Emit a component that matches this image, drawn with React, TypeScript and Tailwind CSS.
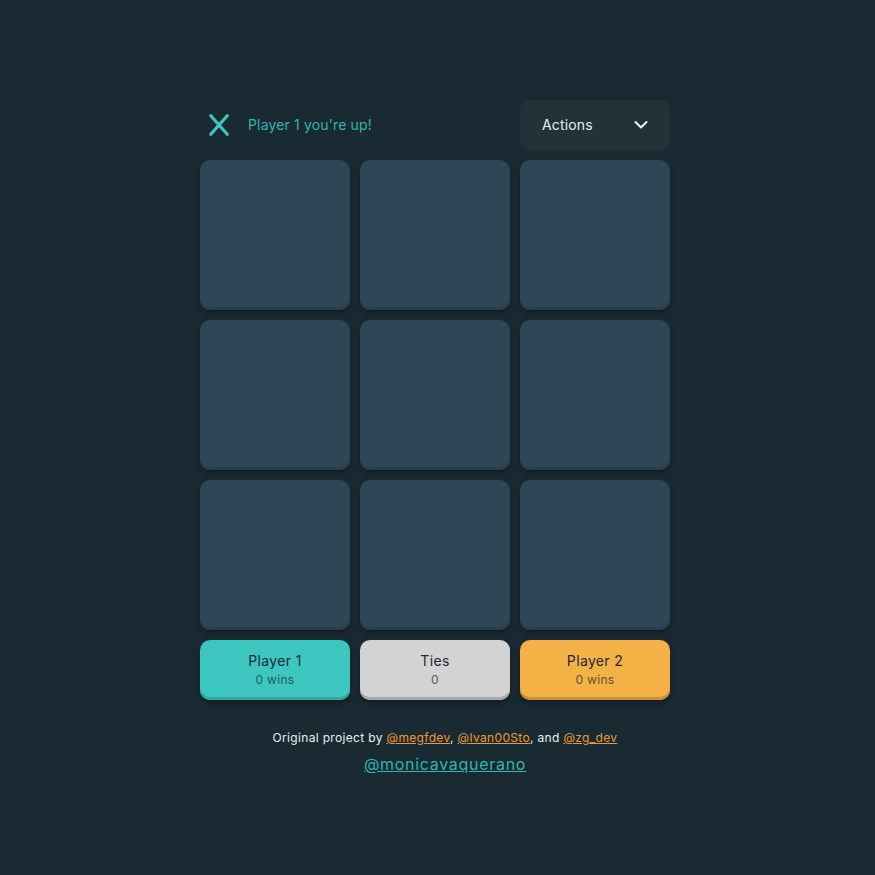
import React from "react";

const cells = [0, 1, 2, 3, 4, 5, 6, 7, 8];
const font = "font-['Inter','Liberation_Sans',sans-serif]";

function Score({ title, sub, cls }: { title: string; sub: string; cls: string }) {
  return (
    <div className={`h-[60px] rounded-[10px] flex flex-col items-center justify-center pb-[2px] text-[#1a2a33] ${cls}`}>
      <div className="text-[14px] leading-[19px] mb-[1px] tracking-[0.35px]">{title}</div>
      <div className="text-[12px] leading-[17px] opacity-70 tracking-[0.3px]">{sub}</div>
    </div>
  );
}

export default function App() {
  return (
    <div className={`min-h-[875px] bg-[#1a2a33] pt-[100px] ${font}`}>
      <div className="w-[470px] ml-[200px]">
        <div className="grid grid-cols-3 gap-[10px]">
          <div className="col-span-2 h-[50px] flex items-center pl-[8px]">
            <svg width="22" height="22" viewBox="0 0 22 22" fill="none" className="mr-[18px]">
              <path d="M2.8 1.8L19.2 20.2M19.2 1.8L2.8 20.2" stroke="#3cc6bf" strokeWidth="3.2" strokeLinecap="round" />
            </svg>
            <span className="text-[14px] leading-[18px] text-[#31b5ae] tracking-[0.15px]">Player 1 you're up!</span>
          </div>
          <div className="h-[50px] rounded-[10px] bg-[#233238] flex items-center justify-between pl-[22px] pr-[21px] text-[#e8eef0]">
            <span className="text-[14px] leading-[18px] pb-[1px] tracking-[0.15px]">Actions</span>
            <svg width="16" height="16" viewBox="0 0 16 16" fill="none">
              <path d="M2.5 5L8 10.5L13.5 5" stroke="#f2f5f6" strokeWidth="2" strokeLinecap="round" strokeLinejoin="round" />
            </svg>
          </div>
          {cells.map((c) => (
            <div key={c} className="h-[150px] rounded-[10px] bg-[#2e4757] shadow-[inset_0_-3px_0_#2a3f4c,0_3px_6px_rgba(0,0,0,0.35)]" />
          ))}
          <Score title="Player 1" sub="0 wins" cls="bg-[#3cc6bf] shadow-[inset_0_-3px_0_#2fa9a3,0_3px_6px_rgba(0,0,0,0.35)]" />
          <Score title="Ties" sub="0" cls="bg-[#d3d3d3] shadow-[inset_0_-3px_0_#a9a9a9,0_3px_6px_rgba(0,0,0,0.35)]" />
          <Score title="Player 2" sub="0 wins" cls="bg-[#f3b146] shadow-[inset_0_-3px_0_#c98f35,0_3px_6px_rgba(0,0,0,0.35)]" />
        </div>
        <div className="pl-[20px]">
          <p className="mt-[29px] text-center text-[12px] leading-[18px] text-[#e8eef0] tracking-[0.33px] whitespace-nowrap">
            Original project by <a className="underline text-[#ee9a2e]" href="#">@megfdev</a>, <a className="underline text-[#ee9a2e]" href="#">@Ivan00Sto</a>, and <a className="underline text-[#ee9a2e]" href="#">@zg_dev</a>
          </p>
          <p className="mt-[5px] text-center text-[16px] leading-[24px] tracking-[0.7px]">
            <a className="underline text-[#31b5ae]" href="#">@monicavaquerano</a>
          </p>
        </div>
      </div>
    </div>
  );
}
